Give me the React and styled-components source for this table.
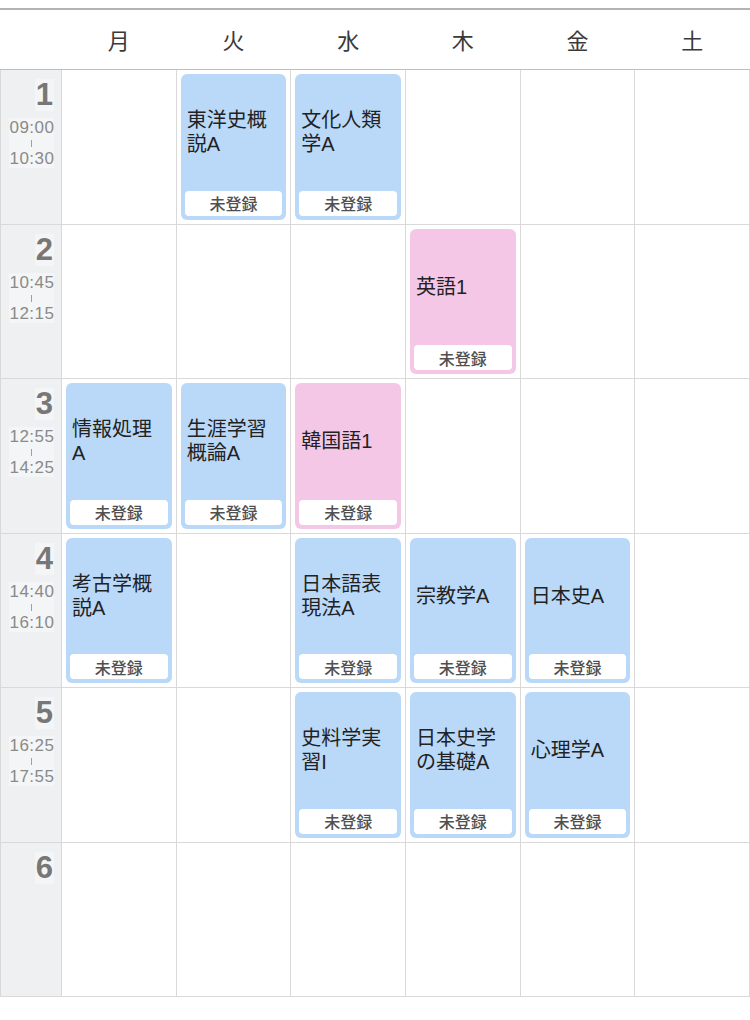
import React from 'react';
import styled, { createGlobalStyle } from 'styled-components';

const days = ['月', '火', '水', '木', '金', '土'];

const periods = [
  { no: 1, start: '09:00', end: '10:30' },
  { no: 2, start: '10:45', end: '12:15' },
  { no: 3, start: '12:55', end: '14:25' },
  { no: 4, start: '14:40', end: '16:10' },
  { no: 5, start: '16:25', end: '17:55' },
  { no: 6 },
];

// key is `${period}-${dayIndex}`
const courses = {
  '1-1': { name: '東洋史概説A', kind: 'blue' },
  '1-2': { name: '文化人類学A', kind: 'blue' },
  '2-3': { name: '英語1', kind: 'pink' },
  '3-0': { name: '情報処理A', kind: 'blue' },
  '3-1': { name: '生涯学習概論A', kind: 'blue' },
  '3-2': { name: '韓国語1', kind: 'pink' },
  '4-0': { name: '考古学概説A', kind: 'blue' },
  '4-2': { name: '日本語表現法A', kind: 'blue' },
  '4-3': { name: '宗教学A', kind: 'blue' },
  '4-4': { name: '日本史A', kind: 'blue' },
  '5-2': { name: '史料学実習I', kind: 'blue' },
  '5-3': { name: '日本史学の基礎A', kind: 'blue' },
  '5-4': { name: '心理学A', kind: 'blue' },
};

const cardColors = {
  blue: '#bad9f9',
  pink: '#f5c7e7',
};

const App = () => {
  return (
    <>
      <GlobalStyle />
      <Page>
        <DayHeader>
          <Corner />
          {days.map((d) => (
            <DayLabel key={d}>{d}</DayLabel>
          ))}
        </DayHeader>

        <Grid>
          {periods.map((p) => (
            <React.Fragment key={p.no}>
              <PeriodCell>
                <PeriodNo>{p.no}</PeriodNo>
                {p.start && (
                  <TimeBlock>
                    <TimeText>{p.start}</TimeText>
                    <Tick />
                    <TimeText>{p.end}</TimeText>
                  </TimeBlock>
                )}
              </PeriodCell>
              {days.map((d, i) => {
                const course = courses[`${p.no}-${i}`];
                return (
                  <Cell key={d}>
                    {course && (
                      <Card color={cardColors[course.kind]}>
                        <CourseName>{course.name}</CourseName>
                        <Status>未登録</Status>
                      </Card>
                    )}
                  </Cell>
                );
              })}
            </React.Fragment>
          ))}
        </Grid>
      </Page>
    </>
  );
};

const GlobalStyle = createGlobalStyle`
  * {
    box-sizing: border-box;
  }

  body {
    margin: 0;
    background: #ffffff;
    font-family: "Liberation Sans", "Noto Sans CJK JP", sans-serif;
  }
`;

const Page = styled.div`
  width: 750px;
  height: 1020px;
  padding-top: 8px;
  background: #ffffff;
`;

const DayHeader = styled.div`
  display: grid;
  grid-template-columns: 60px repeat(6, 1fr);
  column-gap: 1px;
  padding: 0 1px;
  height: 62px;
  border-top: 2px solid #b3b3b3;
  border-bottom: 1px solid #bdbdbd;
`;

const Corner = styled.div``;

const DayLabel = styled.div`
  display: flex;
  align-items: center;
  justify-content: center;
  font-family: "Noto Sans CJK JP", sans-serif;
  font-size: 22px;
  color: #3a3a3a;
  padding-bottom: 2px;
`;

const Grid = styled.div`
  display: grid;
  grid-template-columns: 60px repeat(6, 1fr);
  grid-template-rows: repeat(6, 1fr);
  gap: 1px;
  padding: 0 1px 1px 1px;
  height: 927px;
  background: #d9d9d9;
`;

const PeriodCell = styled.div`
  display: flex;
  flex-direction: column;
  align-items: flex-end;
  padding: 9px 7px 0 0;
  background: #eff0f2;
`;

const PeriodNo = styled.div`
  font-family: "Liberation Sans", sans-serif;
  font-size: 31px;
  line-height: 32px;
  font-weight: bold;
  color: #777777;
  padding: 0 1px;
  background: #f4f5f6;
`;

const TimeBlock = styled.div`
  display: flex;
  flex-direction: column;
  align-items: center;
  margin-top: 7px;
  background: #f4f5f6;
`;

const TimeText = styled.div`
  font-family: "Liberation Sans", sans-serif;
  font-size: 17px;
  line-height: 19px;
  letter-spacing: 0.5px;
  margin-right: -0.5px;
  color: #8a8a8a;
`;

const Tick = styled.div`
  width: 1px;
  height: 7px;
  margin: 3px 0 2px;
  background: #a0a0a0;
`;

const Cell = styled.div`
  display: flex;
  padding: 4px;
  background: #ffffff;
`;

const Card = styled.div`
  flex: 1;
  display: flex;
  flex-direction: column;
  border-radius: 6px;
  background: ${({ color }) => color};
`;

const CourseName = styled.div`
  flex: 1;
  display: flex;
  align-items: center;
  padding: 0 8px 0 6px;
  font-size: 20px;
  line-height: 24px;
  color: #222222;
  word-break: break-all;
`;

const Status = styled.div`
  height: 25px;
  margin: 0 4px 4px;
  border-radius: 4px;
  background: #ffffff;
  display: flex;
  align-items: center;
  justify-content: center;
  font-family: "Noto Sans CJK JP", sans-serif;
  font-size: 16px;
  font-weight: 500;
  color: #505050;
`;

export default App;
